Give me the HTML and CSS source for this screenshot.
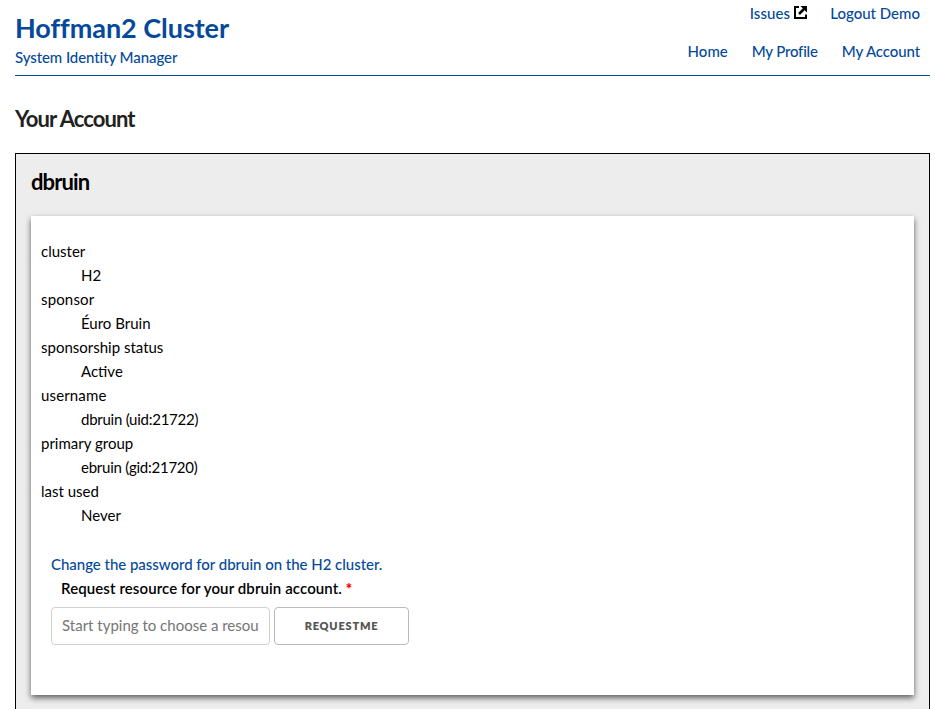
FILE: index.html
```html
<!DOCTYPE html>
<html lang="en">
<head>
<meta charset="utf-8">
<title>Hoffman2 Cluster</title>
<link rel="stylesheet" href="styles.css">
</head>
<body>
<header class="header">
  <div class="brand">
    <h1 class="title"><a href="#">Hoffman2 Cluster</a></h1>
    <a class="subtitle" href="#">System Identity Manager</a>
  </div>
  <div class="menus">
    <nav class="menu menu-top">
      <a class="issues" href="#">Issues<svg class="external" viewBox="0 0 13 13" aria-hidden="true"><path fill="none" stroke="#000" stroke-width="2" d="M5 1H1v11h11V8.5"/><path fill="none" stroke="#000" stroke-width="2.5" d="M5 8l6-6"/><path d="M6.5 0H13v6.5z"/></svg></a>
      <a class="logout" href="#">Logout Demo</a>
    </nav>
    <nav class="menu menu-main">
      <a class="home" href="#">Home</a>
      <a class="profile" href="#">My Profile</a>
      <a class="account" href="#">My Account</a>
    </nav>
  </div>
</header>
<main>
  <h2 class="page-title">Your Account</h2>
  <section class="box">
    <h3 class="box-title">dbruin</h3>
    <div class="card">
      <dl class="details">
        <dt>cluster</dt><dd>H2</dd>
        <dt class="loose">sponsor</dt><dd>Éuro Bruin</dd>
        <dt>sponsorship status</dt><dd>Active</dd>
        <dt class="loose">username</dt><dd class="numeric">dbruin (uid:21722)</dd>
        <dt>primary group</dt><dd class="numeric">ebruin (gid:21720)</dd>
        <dt>last used</dt><dd>Never</dd>
      </dl>
      <form class="request">
        <a class="password" href="#">Change the password for dbruin on the H2 cluster.</a>
        <label class="label" for="resource">Request resource for your dbruin account. <span class="required">*</span></label>
        <div class="controls">
          <input class="input" id="resource" type="text" placeholder="Start typing to choose a resource">
          <button class="button" type="button">requestme</button>
        </div>
      </form>
    </div>
  </section>
</main>
</body>
</html>
```
FILE: styles.css
```css
* { box-sizing: border-box; }
html { overflow: hidden; }
body {
  margin: 0;
  padding: 0 5px 0 15px;
  background: #fff;
  color: #000;
  font: 15px/24px Lato, "Liberation Sans", sans-serif;
  height: 709px;
}
h1, h2, h3, dl, dd { margin: 0; }
a { color: #04499a; text-decoration: none; }
.header {
  display: flex;
  justify-content: space-between;
  height: 76px;
  border-bottom: 1px solid #04499a;
}
.title { padding-top: 10px; font-size: 27px; line-height: 35px; font-weight: 700; letter-spacing: -.05px; }
.subtitle { display: block; font-weight: 500; letter-spacing: -.08px; }
.menus { padding: 1px 10px 0 0; }
.menu { display: flex; justify-content: flex-end; gap: 24px; font-weight: 500; }
.menu-main { margin-top: 14px; }
.issues { display: flex; letter-spacing: .1px; }
.profile { letter-spacing: -.2px; }
.account { letter-spacing: -.1px; }
.external { width: 13px; height: 13px; margin: 5px 0 0 4px; }
.menu-top { gap: 23px; }
.page-title { margin-top: 28px; color: #222; font-size: 22px; line-height: 30px; letter-spacing: -.9px; }
.box { margin-top: 19px; height: 570px; padding: 13px 15px; background: #ededed; border: 1px solid #000; }
.box-title { font-size: 22px; line-height: 30px; letter-spacing: -.9px; }
.card {
  margin-top: 19px;
  height: 479px;
  padding: 23px 10px;
  background: #fff;
  box-shadow: 0 3px 6px rgba(0,0,0,.6);
}
.details { letter-spacing: 0; }
.details dd { margin-left: 40px; }
.details .loose { letter-spacing: .15px; }
.details .numeric { letter-spacing: -.25px; }
.request { padding: 25px 10px 0; }
.password { display: block; width: max-content; font-weight: 500; letter-spacing: -.03px; }
.label { display: block; width: max-content; margin-left: 10px; font-weight: 600; letter-spacing: .1px; }
.required { color: #f00; font-weight: 800; }
.controls { display: flex; gap: 4px; margin-top: 7px; }
.input {
  width: 219px;
  height: 38px;
  padding: 5px 10px 7px;
  background: #fff;
  border: 1px solid #d1d1d1;
  border-radius: 4px;
  font: inherit;
}
.input::placeholder { color: #757575; }
.button {
  width: 135px;
  height: 38px;
  padding: 0;
  background: #fff;
  border: 1px solid #bbb;
  border-radius: 4px;
  color: #555;
  font: 800 11px/36px Lato, "Liberation Sans", sans-serif;
  letter-spacing: .8px;
  text-transform: uppercase;
}
```
